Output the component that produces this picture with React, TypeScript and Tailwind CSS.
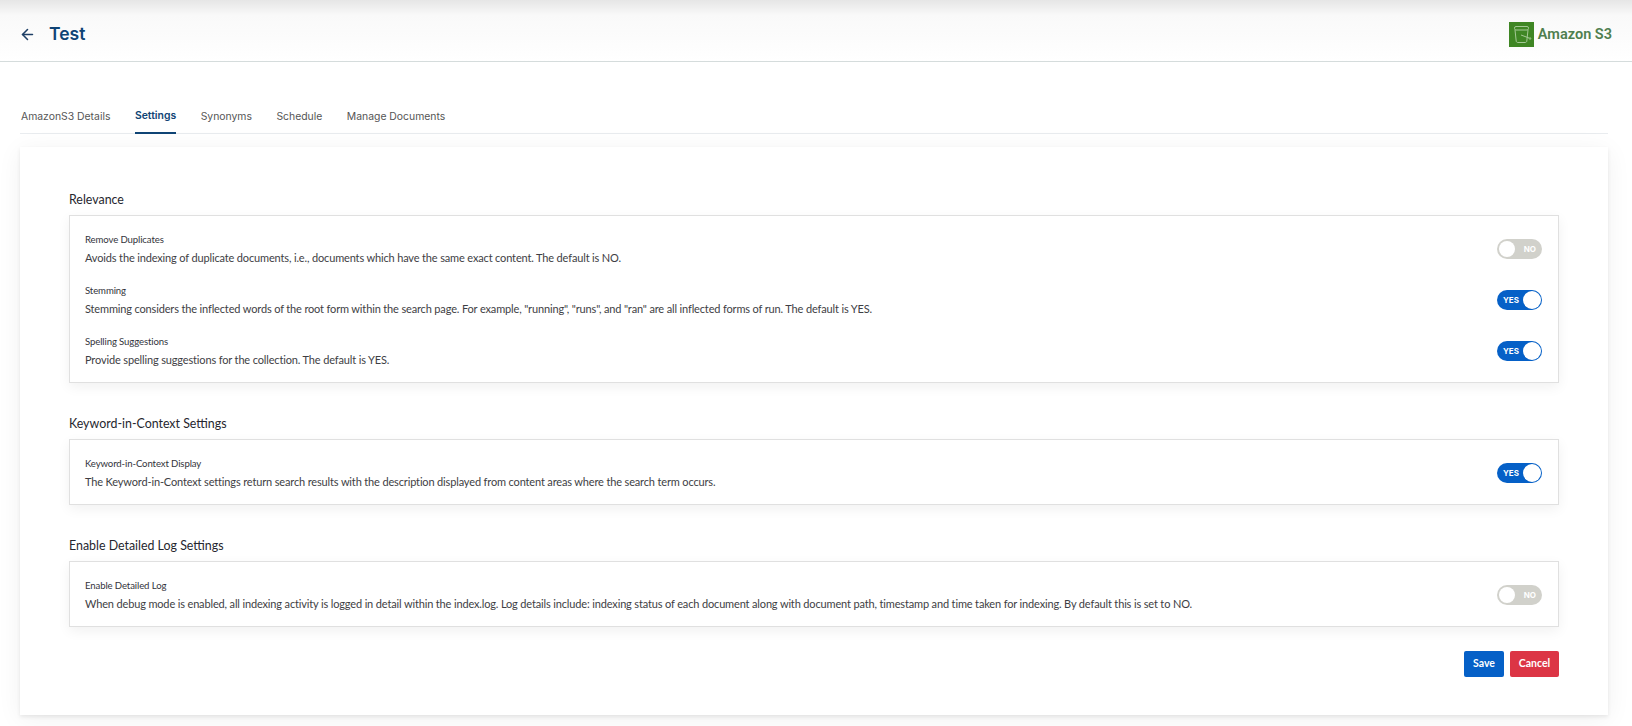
import { ArrowLeft } from "lucide-react";

const tabs = ["AmazonS3 Details", "Settings", "Synonyms", "Schedule", "Manage Documents"];

interface SettingRow {
  title: string;
  description: string;
  on: boolean;
}

const relevance: SettingRow[] = [
  {
    title: "Remove Duplicates",
    description:
      "Avoids the indexing of duplicate documents, i.e., documents which have the same exact content. The default is NO.",
    on: false,
  },
  {
    title: "Stemming",
    description:
      'Stemming considers the inflected words of the root form within the search page. For example, "running", "runs", and "ran" are all inflected forms of run. The default is YES.',
    on: true,
  },
  {
    title: "Spelling Suggestions",
    description: "Provide spelling suggestions for the collection. The default is YES.",
    on: true,
  },
];

const keyword: SettingRow[] = [
  {
    title: "Keyword-in-Context Display",
    description:
      "The Keyword-in-Context settings return search results with the description displayed from content areas where the search term occurs.",
    on: true,
  },
];

const detailedLog: SettingRow[] = [
  {
    title: "Enable Detailed Log",
    description:
      "When debug mode is enabled, all indexing activity is logged in detail within the index.log. Log details include: indexing status of each document along with document path, timestamp and time taken for indexing. By default this is set to NO.",
    on: false,
  },
];

function Toggle({ on }: { on: boolean }) {
  if (on) {
    return (
      <div className="flex h-[20px] w-[45px] items-center justify-between rounded-full bg-[#0560c7] pl-[6px] pr-[1px] font-['Inter',sans-serif] text-[8px] font-bold text-white">
        <span>YES</span>
        <span className="h-[18px] w-[18px] rounded-full bg-white" />
      </div>
    );
  }
  return (
    <div className="flex h-[20px] w-[45px] items-center justify-between rounded-full bg-[#d1d1cb] pl-[2px] pr-[6px] font-['Inter',sans-serif] text-[8px] font-bold text-white">
      <span className="h-[16px] w-[16px] rounded-full bg-white" />
      <span>NO</span>
    </div>
  );
}

function Section({ heading, rows, className }: { heading: string; rows: SettingRow[]; className?: string }) {
  return (
    <section className={className}>
      <h3 className="mb-[4px] text-[12.4px] font-normal leading-[22px] text-[#26262e]">{heading}</h3>
      <div className="flex flex-col gap-[16px] border border-[#e0e0e0] bg-white px-[15px] pb-[14px] pt-[15px] shadow-[0_4px_12px_rgba(0,0,0,0.06)]">
        {rows.map((row) => (
          <div key={row.title} className="flex items-center justify-between pr-[1px]">
            <div>
              <div className="text-[9.6px] leading-[18px] tracking-[-0.12px] text-[#33333b]">{row.title}</div>
              <div className="text-[11px] leading-[17px] tracking-[-0.15px] text-[#3e3e44]">{row.description}</div>
            </div>
            <Toggle on={row.on} />
          </div>
        ))}
      </div>
    </section>
  );
}

function BucketLogo() {
  return (
    <div className="h-[25px] w-[25px] bg-[#3f8624]">
      <svg width="25" height="25" viewBox="0 0 25 25" fill="none" stroke="#a4c995" strokeWidth="1">
        <rect x="5.5" y="4.5" width="14" height="3.5" rx="1.5" />
        <path d="M6 8l1.2 11c.1 1 .8 1.5 1.8 1.5h7c1 0 1.7-.5 1.8-1.5L19 8" />
        <path d="M12 13l8 3" />
        <circle cx="21" cy="16.5" r="0.8" />
      </svg>
    </div>
  );
}

export default function App() {
  return (
    <div className="h-[726px] overflow-hidden bg-white font-['Lato',sans-serif]">
      <header className="flex h-[62px] items-center justify-between border-b border-[#d5dcdc] bg-gradient-to-b from-[#e6e6e6] via-[#f9f9f9] via-[25%] to-white pl-[19px] pr-[20px] pt-[8px]">
        <div className="flex items-center gap-[13px]">
          <ArrowLeft className="h-[17px] w-[17px] text-[#1e3f66]" strokeWidth={2.2} />
          <h1 className="font-['Inter',sans-serif] text-[17.5px] font-semibold text-[#0f4475]">Test</h1>
        </div>
        <div className="flex items-center gap-[4px]">
          <BucketLogo />
          <span className="font-['Roboto',sans-serif] text-[14.5px] font-semibold text-[#4f7f4f]">Amazon S3</span>
        </div>
      </header>

      <div className="px-[20px]">
        <nav className="mr-[4px] mt-[34px] flex h-[38px] gap-[24.5px] border-b border-[#e9ecef] pl-[1px] font-['Inter',sans-serif] text-[10.4px] text-[#555]">
          {tabs.map((tab) =>
            tab === "Settings" ? (
              <span
                key={tab}
                className="-mb-px flex items-center border-b-2 border-[#0f4475] pt-[4px] font-semibold text-[#0f4475]"
              >
                {tab}
              </span>
            ) : (
              <span key={tab} className="flex items-center pt-[4px]">
                {tab}
              </span>
            ),
          )}
        </nav>

        <main className="mt-[13px] h-[568px] w-[1588px] bg-white px-[49px] pt-[42px] shadow-[0_2px_4px_rgba(0,0,0,0.08),0_4px_24px_rgba(0,0,0,0.06)]">
          <Section heading="Relevance" rows={relevance} />
          <Section heading="Keyword-in-Context Settings" rows={keyword} className="mt-[30px]" />
          <Section heading="Enable Detailed Log Settings" rows={detailedLog} className="mt-[30px]" />
          <div className="mt-[24px] flex justify-end gap-[6px]">
            <button className="h-[26px] w-[40px] rounded-[2px] bg-[#0560c7] text-[10.5px] font-bold text-white">
              Save
            </button>
            <button className="h-[26px] w-[49px] rounded-[2px] bg-[#dc3545] text-[10.5px] font-bold text-white">
              Cancel
            </button>
          </div>
        </main>
      </div>
    </div>
  );
}
